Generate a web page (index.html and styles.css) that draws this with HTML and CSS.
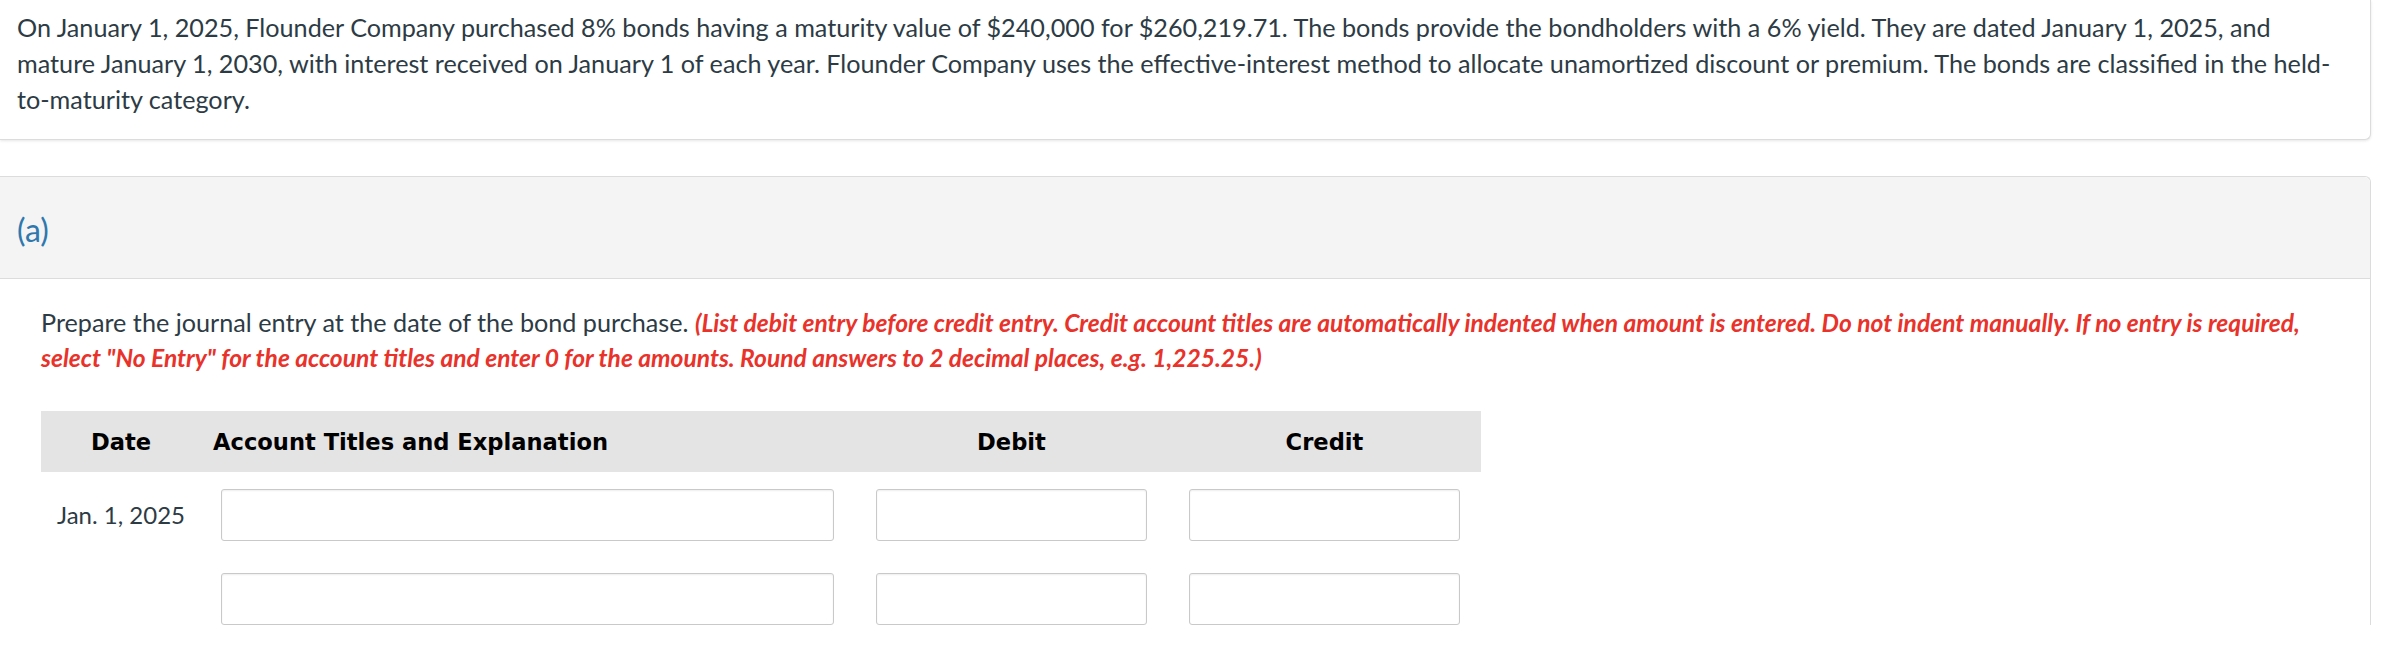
FILE: index.html
```html
<!DOCTYPE html>
<html lang="en">
<head>
<meta charset="utf-8">
<title>Flounder Company bonds</title>
<link rel="stylesheet" href="styles.css">
</head>
<body>
<div class="page">
  <div class="card">
    <p class="question">On January 1, 2025, Flounder Company purchased 8% bonds having a maturity value of $240,000 for $260,219.71. The bonds provide the bondholders with a 6% yield. They are dated January 1, 2025, and mature January 1, 2030, with interest received on January 1 of each year. Flounder Company uses the effective-interest method to allocate unamortized discount or premium. The bonds are classified in the held-to-maturity category.</p>
  </div>

  <section class="part">
    <div class="part-head"><span class="part-label">(a)</span></div>
    <div class="part-body">
      <p class="instructions">Prepare the journal entry at the date of the bond purchase. <em class="note">(List debit entry before credit entry. Credit account titles are automatically indented when amount is entered. Do not indent manually. If no entry is required, select "No Entry" for the account titles and enter 0 for the amounts. Round answers to 2 decimal places, e.g. 1,225.25.)</em></p>

      <div class="journal">
        <div class="jhead">
          <div class="h-date">Date</div>
          <div class="h-acct">Account Titles and Explanation</div>
          <div class="h-num">Debit</div>
          <div class="h-num">Credit</div>
        </div>
        <div class="jrows">
          <div class="jrow">
            <div class="c-date">Jan. 1, 2025</div>
            <div class="c-acct"><input class="field" type="text"></div>
            <div class="c-num"><input class="field" type="text"></div>
            <div class="c-num"><input class="field" type="text"></div>
          </div>
          <div class="jrow">
            <div class="c-date"></div>
            <div class="c-acct"><input class="field" type="text"></div>
            <div class="c-num"><input class="field" type="text"></div>
            <div class="c-num"><input class="field" type="text"></div>
          </div>
        </div>
      </div>
    </div>
  </section>
</div>
</body>
</html>
```

FILE: styles.css
```css
html, body {
  margin: 0;
  padding: 0;
  background: #ffffff;
}

body {
  font-family: "Lato", "Liberation Sans", sans-serif;
  font-size: 25.2px;
  line-height: 36px;
  color: #2d3b45;
}

.page {
  margin-right: 13px;
}

.card {
  padding: 9px 17px 22px 17px;
  border-right: 1px solid #dcdcdc;
  border-bottom: 1px solid #dcdcdc;
  border-bottom-right-radius: 6px;
  box-shadow: 0 1px 3px rgba(0, 0, 0, 0.10);
  background: #ffffff;
}

.question {
  margin: 0;
}

.part {
  margin-top: 36px;
  border-top: 1px solid #dcdcdc;
  border-right: 1px solid #dcdcdc;
  border-top-right-radius: 6px;
}

.part-head {
  height: 101px;
  background: #f4f4f4;
  border-bottom: 1px solid #dcdcdc;
  border-top-right-radius: 6px;
  display: flex;
  align-items: center;
  padding-left: 17px;
}

.part-label {
  font-size: 32px;
  line-height: 40px;
  color: #2f78ae;
  padding-top: 4px;
}

.part-body {
  padding: 26px 41px 0 41px;
}

.instructions {
  margin: 0;
  line-height: 35px;
}

.note {
  color: #e8322a;
  font-weight: 700;
  font-style: italic;
  font-size: 24.6px;
}

.journal {
  margin-top: 36px;
  width: 1440px;
}

.jhead,
.jrow {
  display: grid;
  grid-template-columns: 160px 654px 313px 313px;
}

.jhead {
  height: 61px;
  background: #e4e4e4;
  align-items: center;
  font-family: "DejaVu Sans", "Open Sans", sans-serif;
  font-weight: 700;
  font-size: 22.6px;
  line-height: 30px;
  color: #000000;
}

.h-date {
  text-align: center;
}

.h-acct {
  padding-left: 12px;
}

.h-num {
  text-align: center;
}

.jrows {
  padding-top: 17px;
  display: flex;
  flex-direction: column;
  gap: 32px;
}

.jrow {
  height: 52px;
  align-items: center;
  font-size: 24px;
}

.c-date {
  text-align: center;
}

.c-acct {
  padding: 0 21px 0 20px;
}

.c-num {
  padding: 0 21px;
}

.field {
  display: block;
  box-sizing: border-box;
  width: 100%;
  height: 52px;
  margin: 0;
  border: 1px solid #c9c9c9;
  border-radius: 3px;
  box-shadow: inset 0 1px 2px rgba(0, 0, 0, 0.07);
  background: #ffffff;
  font-family: "Lato", sans-serif;
  font-size: 24px;
}
```
